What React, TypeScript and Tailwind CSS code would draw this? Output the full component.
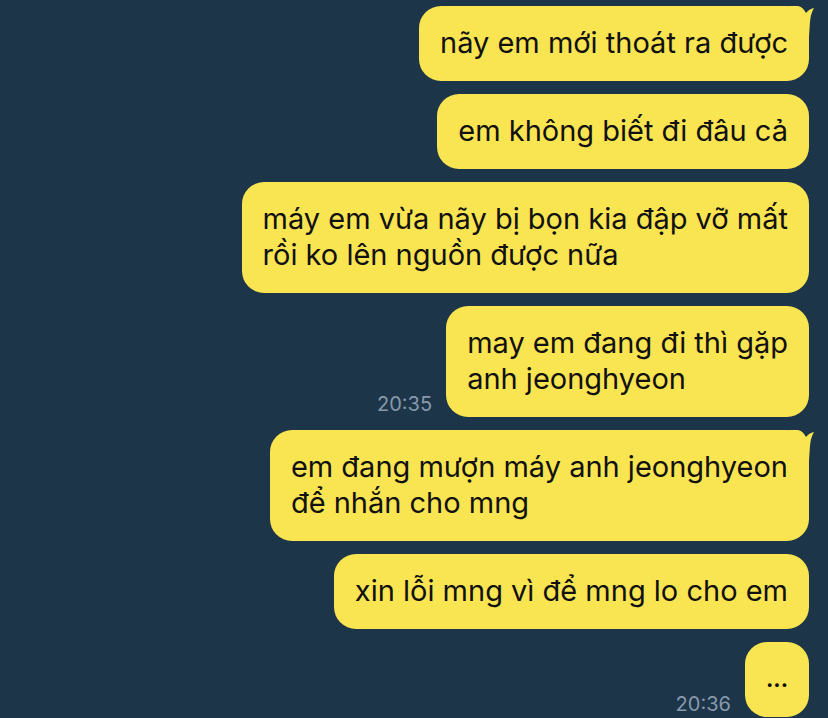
import React from "react";

type Msg = { lines: string[]; tail?: boolean; time?: string };

const messages: Msg[] = [
  { lines: ["nãy em mới thoát ra được"], tail: true },
  { lines: ["em không biết đi đâu cả"] },
  { lines: ["máy em vừa nãy bị bọn kia đập vỡ mất", "rồi ko lên nguồn được nữa"] },
  { lines: ["may em đang đi thì gặp", "anh jeonghyeon"], time: "20:35" },
  { lines: ["em đang mượn máy anh jeonghyeon", "để nhắn cho mng"], tail: true },
  { lines: ["xin lỗi mng vì để mng lo cho em"] },
  { lines: ["..."], time: "20:36" },
];

// little horn on the top-right corner of the first bubble in a group
const Tail = () => (
  <svg className="absolute -right-[8px] top-0" width="28" height="30" viewBox="0 0 28 30">
    <path d="M0 0 L9 0 Q14 1 17 7 Q20 3 25 2 Q21.5 8 21 16 L20 30 L0 30 Z" fill="#f9e451" />
  </svg>
);

const Bubble = ({ msg }: { msg: Msg }) => (
  <div className="flex items-end justify-end gap-[14px]">
    {msg.time && <span className="text-[20px] leading-[24px] text-[#8799ab] mb-[1px]">{msg.time}</span>}
    <div className="relative">
      <div className="relative rounded-[22px] bg-[#f9e451] px-[21px] pt-[19px] pb-[20px] text-[29px] leading-[36px] text-[#111] min-w-[63px]">
        {msg.lines.map((l, i) => (
          <div key={i} className={l === "..." ? "text-center text-[22px] font-bold" : ""}>{l}</div>
        ))}
      </div>
      {msg.tail && <Tail />}
    </div>
  </div>
);

export default function App() {
  return (
    <div
      className="w-[828px] h-[718px] overflow-hidden bg-[#1d3549] pt-[6px] pr-[19px] flex flex-col gap-[13px]"
      style={{ fontFamily: "Inter, 'Noto Sans', sans-serif" }}
    >
      {messages.map((m, i) => (
        <Bubble key={i} msg={m} />
      ))}
    </div>
  );
}
